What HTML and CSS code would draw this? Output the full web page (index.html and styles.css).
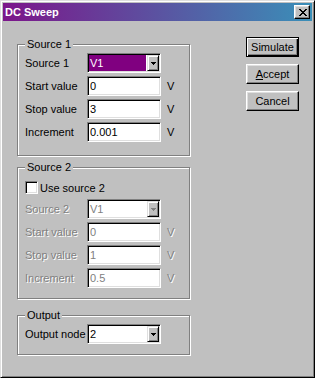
FILE: index.html
```html
<!DOCTYPE html>
<html lang="en">
<head>
    <meta charset="UTF-8">
    <title>DC Sweep</title>
    <link rel="stylesheet" href="styles.css">
</head>
<body>
    <div class="window">
        <div class="titlebar">
            <span class="title">DC Sweep</span>
            <button class="close">
                <svg width="8" height="7" viewBox="0 0 8 7" shape-rendering="crispEdges"><path d="M0 0h2v1h-2zM6 0h2v1h-2zM1 1h2v1h-2zM5 1h2v1h-2zM2 2h4v1h-4zM3 3h2v1h-2zM2 4h4v1h-4zM1 5h2v1h-2zM5 5h2v1h-2zM0 6h2v1h-2zM6 6h2v1h-2z" fill="#000"/></svg>
            </button>
        </div>
        <div class="client">
            <div class="groups">
                <fieldset class="group group-one">
                    <legend>Source 1</legend>
                    <div class="row">
                        <label>Source 1</label>
                        <div class="combo">
                            <span class="combo-value selected">V1</span>
                            <span class="combo-btn"><svg width="5" height="3" viewBox="0 0 5 3" shape-rendering="crispEdges"><path d="M0 0h5v1h-1v1h-1v1h-1v-1h-1v-1h-1z" fill="#000"/></svg></span>
                        </div>
                    </div>
                    <div class="row">
                        <label>Start value</label>
                        <input class="edit" value="0">
                        <span class="unit">V</span>
                    </div>
                    <div class="row">
                        <label>Stop value</label>
                        <input class="edit" value="3">
                        <span class="unit">V</span>
                    </div>
                    <div class="row">
                        <label>Increment</label>
                        <input class="edit" value="0.001">
                        <span class="unit">V</span>
                    </div>
                </fieldset>

                <fieldset class="group group-two">
                    <legend>Source 2</legend>
                    <div class="check-row">
                        <span class="check"></span>
                        <span>Use source 2</span>
                    </div>
                    <div class="row disabled">
                        <label>Source 2</label>
                        <div class="combo">
                            <span class="combo-value">V1</span>
                            <span class="combo-btn"><svg width="5" height="3" viewBox="0 0 5 3" shape-rendering="crispEdges"><path d="M0 0h5v1h-1v1h-1v1h-1v-1h-1v-1h-1z" fill="#808080"/></svg></span>
                        </div>
                    </div>
                    <div class="row disabled">
                        <label>Start value</label>
                        <input class="edit" value="0" disabled>
                        <span class="unit">V</span>
                    </div>
                    <div class="row disabled">
                        <label>Stop value</label>
                        <input class="edit" value="1" disabled>
                        <span class="unit">V</span>
                    </div>
                    <div class="row disabled">
                        <label>Increment</label>
                        <input class="edit" value="0.5" disabled>
                        <span class="unit">V</span>
                    </div>
                </fieldset>

                <fieldset class="group group-out">
                    <legend>Output</legend>
                    <div class="row">
                        <label>Output node</label>
                        <div class="combo">
                            <span class="combo-value">2</span>
                            <span class="combo-btn"><svg width="5" height="3" viewBox="0 0 5 3" shape-rendering="crispEdges"><path d="M0 0h5v1h-1v1h-1v1h-1v-1h-1v-1h-1z" fill="#000"/></svg></span>
                        </div>
                    </div>
                </fieldset>
            </div>

            <div class="buttons">
                <button class="btn default">Simulate</button>
                <button class="btn"><u>A</u>ccept</button>
                <button class="btn">Cancel</button>
            </div>
        </div>
    </div>
</body>
</html>
```

FILE: styles.css
```css
* {
    box-sizing: border-box;
}

html,
body {
    margin: 0;
    padding: 0;
    background-color: #c0c0c0;
}

body {
    font-family: 'Liberation Sans', Arial, sans-serif;
    font-size: 11px;
    color: #000;
}

.window {
    width: 315px;
    height: 378px;
    display: flex;
    flex-direction: column;
    padding: 2px;
    background: #c0c0c0;
    border: 1px solid;
    border-color: #dfdfdf #000 #000 #dfdfdf;
    box-shadow: inset 1px 1px #fff, inset -1px -1px #808080;
}

.titlebar {
    height: 18px;
    display: flex;
    align-items: center;
    justify-content: space-between;
    padding: 0 2px;
    background: linear-gradient(to right, #7c168a, #3a8fb8);
}

.title {
    color: #fff;
    font-weight: bold;
}

.close {
    width: 16px;
    height: 14px;
    padding: 0 0 0 1px;
    display: flex;
    align-items: center;
    justify-content: center;
    background: #c0c0c0;
    border: 1px solid;
    border-color: #fff #000 #000 #fff;
    box-shadow: inset -1px -1px #808080, inset 1px 1px #dfdfdf;
}

.close svg {
    display: block;
}

.client {
    flex: 1;
    display: flex;
    align-items: flex-start;
    padding: 16px 0 0 14px;
}

.groups {
    width: 173px;
    padding-top: 1px;
}

/* etched group frame */
.group {
    margin: 0;
    min-width: 0;
    border: 1px solid #808080;
    box-shadow: inset 1px 1px #fff, 1px 1px #fff;
    padding: 2px 7px 13px 7px;
}

.group legend {
    padding: 0 2px;
    line-height: 13px;
    background: #c0c0c0;
}

.group-two {
    margin-top: 5px;
    padding-top: 6px;
    padding-bottom: 10px;
}

.group-out {
    margin-top: 10px;
    padding-bottom: 10px;
}

.row {
    display: flex;
    align-items: center;
    height: 20px;
    margin-bottom: 3px;
}

.row:last-child {
    margin-bottom: 0;
}

.row label {
    width: 62px;
    flex: none;
}

.unit {
    margin-left: 6px;
}

.disabled label,
.disabled .unit {
    color: #808080;
    text-shadow: 1px 1px #fff;
}

.edit {
    width: 74px;
    height: 20px;
    margin: 0;
    padding: 0 2px;
    font: inherit;
    color: #000;
    background: #fff;
    border: 1px solid;
    border-color: #808080 #fff #fff #808080;
    box-shadow: inset 1px 1px #000, inset -1px -1px #dfdfdf;
    outline: 0;
}

.edit:disabled {
    color: #808080;
    background: #fff;
}

.combo {
    width: 74px;
    height: 20px;
    display: flex;
    padding: 1px;
    background: #fff;
    border: 1px solid;
    border-color: #808080 #fff #fff #808080;
    box-shadow: inset 1px 1px #000, inset -1px -1px #dfdfdf;
}

.combo-value {
    flex: 1;
    margin-right: 1px;
    padding-left: 1px;
    line-height: 16px;
}

.combo-value.selected {
    background: #800080;
    color: #fff;
}

.disabled .combo-value {
    color: #808080;
}

.combo-btn {
    width: 12px;
    height: 16px;
    display: flex;
    align-items: center;
    justify-content: center;
    background: #c0c0c0;
    border: 1px solid;
    border-color: #dfdfdf #000 #000 #dfdfdf;
    box-shadow: inset 1px 1px #fff, inset -1px -1px #808080;
}

.combo-btn svg {
    display: block;
}

.check-row {
    display: flex;
    align-items: center;
    height: 15px;
    margin-bottom: 4px;
}

.check {
    width: 13px;
    height: 13px;
    margin-right: 2px;
    background: #fff;
    border: 1px solid;
    border-color: #808080 #fff #fff #808080;
    box-shadow: inset 1px 1px #000, inset -1px -1px #dfdfdf;
}

.buttons {
    display: flex;
    flex-direction: column;
    margin-left: 56px;
}

.btn {
    width: 53px;
    height: 20px;
    margin-bottom: 7px;
    padding: 0;
    font: inherit;
    color: #000;
    background: #c0c0c0;
    border: 1px solid;
    border-color: #fff #000 #000 #fff;
    box-shadow: inset -1px -1px #808080, inset 1px 1px #dfdfdf;
}

.btn.default {
    border-color: #000;
    box-shadow: inset 1px 1px #fff, inset -1px -1px #000, inset -2px -2px #808080;
}
```
